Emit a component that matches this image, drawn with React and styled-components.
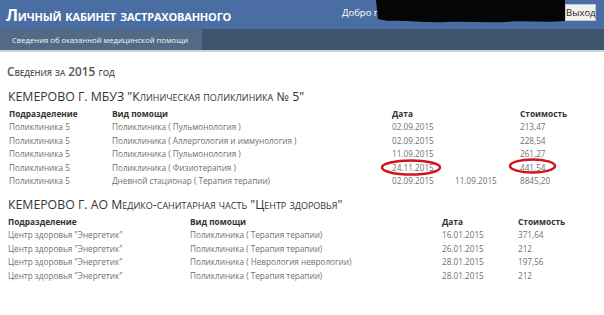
import React from "react";
import styled, { createGlobalStyle } from "styled-components";

const GlobalStyle = createGlobalStyle`
  html, body {
    margin: 0;
    padding: 0;
    background: #ffffff;
    font-family: "Open Sans", "Noto Sans", sans-serif;
  }
`;

const Page = styled.div`
  position: relative;
  width: 604px;
  height: 315px;
  overflow: hidden;
  background: #ffffff;
`;

const Header = styled.header`
  height: 29px;
  background: #4a6ea3;
  display: flex;
  align-items: center;
  justify-content: space-between;
  padding: 0 8px 0 6px;
  position: relative;
`;

const Title = styled.h1`
  margin: 0;
  color: #ffffff;
  font-size: 16.2px;
  font-weight: 700;
  font-variant: small-caps;
  letter-spacing: -0.2px;
`;

const UserBox = styled.div`
  display: flex;
  align-items: center;
  gap: 4px;
  margin-top: -4px;
  font-size: 9.5px;
  color: #ffffff;
`;

const Welcome = styled.span`
  width: 219px;
  white-space: nowrap;
`;

const ExitButton = styled.button`
  font-family: "Open Sans", sans-serif;
  font-size: 9.5px;
  width: 31px;
  padding: 0;
  height: 17px;
  background: #f2f2f2;
  border: 1px solid #c8c8c8;
  color: #222;
`;

const Nav = styled.nav`
  height: 21px;
  background: #3f546d;
  border-bottom: 2px solid #c9d3dc;
  display: flex;
`;

const NavTab = styled.div`
  width: 202px;
  background: #536a86;
  color: #f0f4f8;
  font-size: 7.7px;
  white-space: nowrap;
  display: flex;
  align-items: center;
  padding-left: 12px;
  box-sizing: border-box;
`;

const Content = styled.main`
  padding: 11px 8px 0 7px;
`;

const YearTitle = styled.h2`
  margin: 0 0 10px;
  font-size: 11.8px;
  line-height: 16px;
  font-weight: 600;
  font-variant: small-caps;
  color: #555;
`;

const OrgTitle = styled.h3`
  margin: 0 0 2px 1px;
  font-size: 12.3px;
  line-height: 16px;
  font-weight: 400;
  font-variant: small-caps;
  color: #333;
  white-space: nowrap;
`;

const Table = styled.table`
  border-collapse: collapse;
  table-layout: fixed;
  width: 589px;
  margin: 0 0 9.5px ${(p) => p.$indent}px;
  font-size: 8.2px;
`;

const Th = styled.th`
  text-align: left;
  font-weight: 700;
  font-size: 8.3px;
  color: #333;
  padding: 0;
  height: 13px;
  line-height: 13px;
`;

const Td = styled.td`
  color: #707070;
  padding: 0;
  height: 13.5px;
  line-height: 13.5px;
  white-space: nowrap;
`;

const Blackout = styled.svg`
  position: absolute;
  left: 376px;
  top: 0;
`;

const Marks = styled.svg`
  position: absolute;
  left: 0;
  top: 0;
  pointer-events: none;
`;

const first = [
  ["Поликлиника 5", "Поликлиника ( Пульмонология )", "02.09.2015", "", "213,47"],
  ["Поликлиника 5", "Поликлиника ( Аллергология и иммунология )", "02.09.2015", "", "228,54"],
  ["Поликлиника 5", "Поликлиника ( Пульмонология )", "11.09.2015", "", "261,27"],
  ["Поликлиника 5", "Поликлиника ( Физиотерапия )", "24.11.2015", "", "441,54"],
  ["Поликлиника 5", "Дневной стационар ( Терапия терапии)", "02.09.2015", "11.09.2015", "8845,20"],
];

const second = [
  ["Центр здоровья \"Энергетик\"", "Поликлиника ( Терапия терапии)", "16.01.2015", "371,64"],
  ["Центр здоровья \"Энергетик\"", "Поликлиника ( Терапия терапии)", "26.01.2015", "212"],
  ["Центр здоровья \"Энергетик\"", "Поликлиника ( Неврология неврологии)", "28.01.2015", "197,56"],
  ["Центр здоровья \"Энергетик\"", "Поликлиника ( Терапия терапии)", "28.01.2015", "212"],
];

export default function App() {
  return (
    <Page>
      <GlobalStyle />
      <Header>
        <Title>Личный кабинет застрахованного</Title>
        <UserBox>
          <Welcome>Добро пожаловать</Welcome>
          <ExitButton>Выход</ExitButton>
        </UserBox>
        <Blackout width="190" height="24" viewBox="0 0 190 24">
          <path d="M0 0 H189 V21 C170 23 150 20 130 22 C110 23 90 21 70 22 C50 23 30 20 12 21 L2 19 Z" fill="#050505" />
        </Blackout>
      </Header>
      <Nav>
        <NavTab>Сведения об оказанной медицинской помощи</NavTab>
      </Nav>
      <Content>
        <YearTitle>Сведения за 2015 год</YearTitle>
        <OrgTitle>КЕМЕРОВО Г. МБУЗ "Клиническая поликлиника № 5"</OrgTitle>
        <Table $indent={2}>
          <colgroup>
            <col style={{ width: 103 }} />
            <col style={{ width: 280 }} />
            <col style={{ width: 63 }} />
            <col style={{ width: 65 }} />
            <col />
          </colgroup>
          <thead>
            <tr>
              <Th>Подразделение</Th>
              <Th>Вид помощи</Th>
              <Th>Дата</Th>
              <Th />
              <Th>Стоимость</Th>
            </tr>
          </thead>
          <tbody>
            {first.map((r, i) => (
              <tr key={i}>
                {r.map((c, j) => (
                  <Td key={j}>{c}</Td>
                ))}
              </tr>
            ))}
          </tbody>
        </Table>
        <OrgTitle>КЕМЕРОВО Г. АО Медико-санитарная часть "Центр здоровья"</OrgTitle>
        <Table $indent={1}>
          <colgroup>
            <col style={{ width: 182 }} />
            <col style={{ width: 252 }} />
            <col style={{ width: 76 }} />
            <col />
          </colgroup>
          <thead>
            <tr>
              <Th>Подразделение</Th>
              <Th>Вид помощи</Th>
              <Th>Дата</Th>
              <Th>Стоимость</Th>
            </tr>
          </thead>
          <tbody>
            {second.map((r, i) => (
              <tr key={i}>
                {r.map((c, j) => (
                  <Td key={j}>{c}</Td>
                ))}
              </tr>
            ))}
          </tbody>
        </Table>
      </Content>
      <Marks width="604" height="315">
        <ellipse cx="411" cy="167.5" rx="29" ry="7" fill="none" stroke="#d3121c" strokeWidth="2.5" />
        <ellipse cx="532.5" cy="166" rx="22.5" ry="6.5" fill="none" stroke="#d3121c" strokeWidth="2.5" />
      </Marks>
    </Page>
  );
}
